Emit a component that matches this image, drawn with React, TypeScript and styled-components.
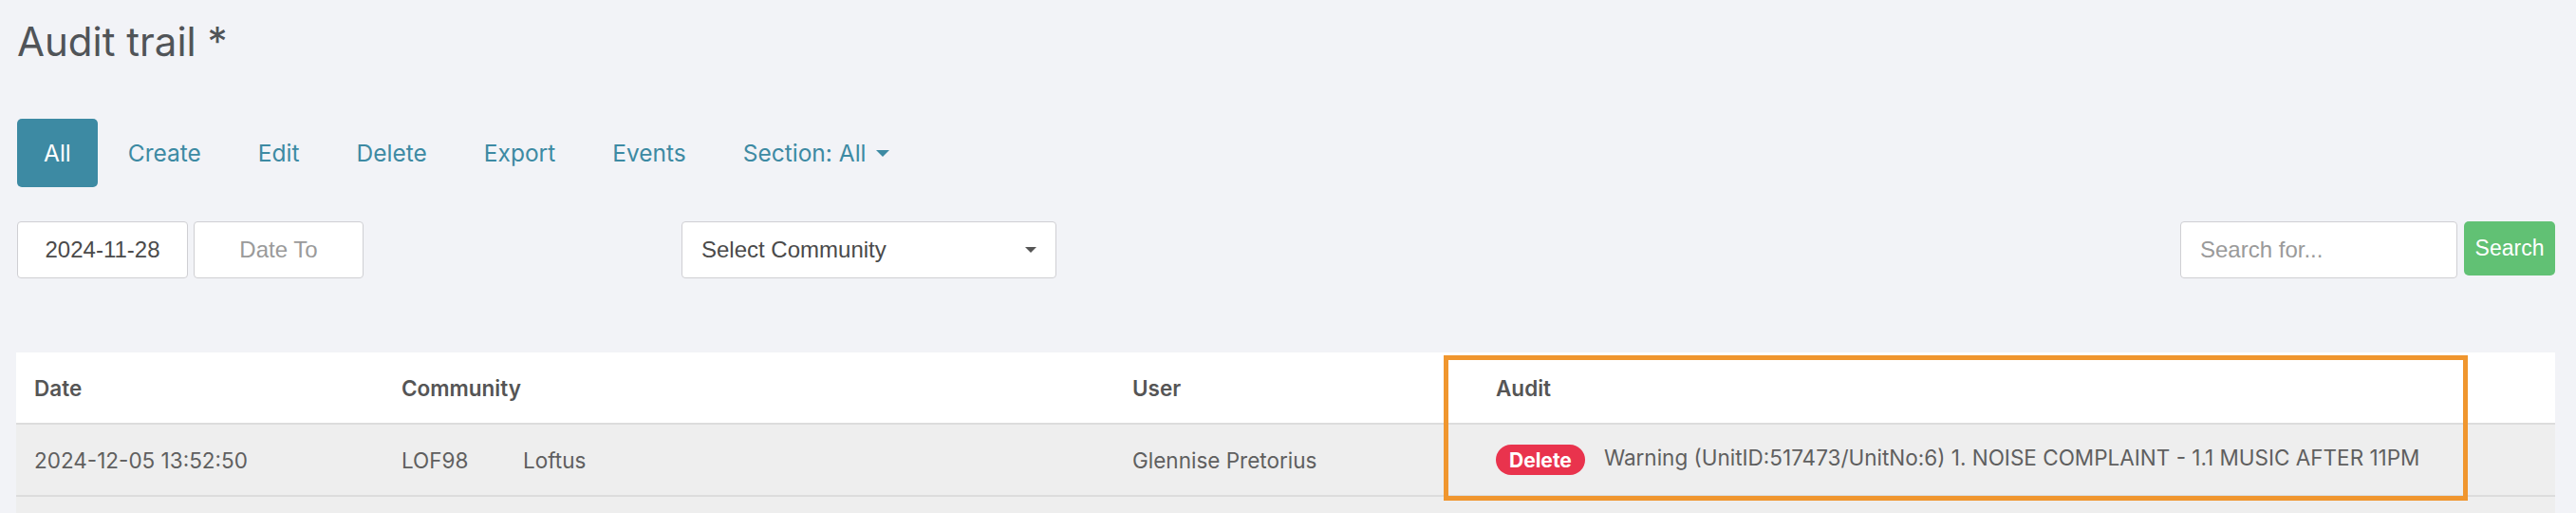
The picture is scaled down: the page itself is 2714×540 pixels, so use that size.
import React from 'react';
import styled, { createGlobalStyle } from 'styled-components';

const GlobalStyle = createGlobalStyle`
  html, body {
    margin: 0;
    padding: 0;
    background: #f2f3f7;
  }
  body {
    font-family: Inter, "Noto Sans", sans-serif;
    color: #555;
  }
`;

const Page = styled.div`
  padding: 18px 22px 0 17px;
  height: 540px;
  box-sizing: border-box;
  overflow: hidden;
`;

const Title = styled.h1`
  margin: 0 0 0 1px;
  font-size: 42px;
  font-weight: 400;
  line-height: 51px;
  color: #505458;
`;

const Tabs = styled.nav`
  display: flex;
  align-items: center;
  gap: 4px;
  margin: 56px 0 0 1px;
`;

const Tab = styled.a<{ $active?: boolean }>`
  display: flex;
  align-items: center;
  gap: 10px;
  height: 72px;
  padding: 0 28px;
  border-radius: 5px;
  font-size: 24.5px;
  color: ${(p) => (p.$active ? '#fff' : '#3d8aa3')};
  background: ${(p) => (p.$active ? '#3d8aa3' : 'transparent')};
  cursor: pointer;
`;

const Caret = styled.span<{ $color: string; $w: number }>`
  width: 0;
  height: 0;
  border-left: ${(p) => p.$w / 2}px solid transparent;
  border-right: ${(p) => p.$w / 2}px solid transparent;
  border-top: ${(p) => p.$w / 2}px solid ${(p) => p.$color};
`;

const Filters = styled.div`
  display: flex;
  align-items: flex-start;
  margin: 36px 0 0 1px;
`;

const Field = styled.div<{ $w: number; $center?: boolean; $muted?: boolean }>`
  box-sizing: border-box;
  display: flex;
  align-items: center;
  justify-content: ${(p) => (p.$center ? 'center' : 'space-between')};
  width: ${(p) => p.$w}px;
  height: 60px;
  padding: 0 20px;
  background: #fff;
  border: 1px solid #cfcfd3;
  border-radius: 4px;
  font-family: "Liberation Sans", Arial, sans-serif;
  font-size: 24px;
  color: ${(p) => (p.$muted ? '#9a9a9a' : '#4a4a4a')};
`;

const DateGroup = styled.div`
  display: flex;
  gap: 6px;
`;

const CommunityWrap = styled.div`
  margin-left: 335px;
`;

const SearchGroup = styled.div`
  display: flex;
  gap: 7px;
  margin-left: auto;
`;

const SearchButton = styled.button`
  height: 57px;
  width: 96px;
  padding: 0;
  border: none;
  border-radius: 5px;
  background: #61c174;
  color: #fff;
  font-family: "Liberation Sans", Arial, sans-serif;
  font-size: 23px;
`;

const TableWrap = styled.div`
  position: relative;
  margin-top: 78px;
`;

const Table = styled.table`
  width: 100%;
  border-collapse: collapse;
  table-layout: fixed;
  font-size: 22.5px;
`;

const HeadCell = styled.th<{ $w?: number }>`
  box-sizing: border-box;
  width: ${(p) => (p.$w ? `${p.$w}px` : 'auto')};
  height: 75px;
  padding: 0 19px;
  text-align: left;
  font-weight: 600;
  color: #555;
  background: #fff;
  border-bottom: 2px solid #dcdcdc;
`;

const Row = styled.tr`
  background: #eeeeee;
`;

const Cell = styled.td`
  box-sizing: border-box;
  height: 76px;
  padding: 0 19px;
  color: #5f5f5f;
  border-bottom: 2px solid #dcdcdc;
  white-space: nowrap;
`;

const Code = styled.span`
  display: inline-block;
  width: 128px;
`;

const Badge = styled.span`
  display: inline-flex;
  align-items: center;
  height: 32px;
  padding: 0 14px;
  margin-right: 20px;
  border-radius: 16px;
  background: #e9334d;
  color: #fff;
  font-weight: 700;
  font-size: 21px;
  vertical-align: middle;
`;

const Highlight = styled.div`
  position: absolute;
  left: 1504px;
  top: 3px;
  width: 1079px;
  height: 153px;
  box-sizing: border-box;
  border: 5px solid #f0962e;
  pointer-events: none;
`;

export default function App() {
  const tabs = ['All', 'Create', 'Edit', 'Delete', 'Export', 'Events'];
  return (
    <>
      <GlobalStyle />
      <Page>
        <Title>Audit trail *</Title>
        <Tabs>
          {tabs.map((t, i) => (
            <Tab key={t} $active={i === 0}>
              {t}
            </Tab>
          ))}
          <Tab>
            Section: All
            <Caret $color="#3d8aa3" $w={14} />
          </Tab>
        </Tabs>
        <Filters>
          <DateGroup>
            <Field $w={180} $center>
              2024-11-28
            </Field>
            <Field $w={179} $center $muted>
              Date To
            </Field>
          </DateGroup>
          <CommunityWrap>
            <Field $w={395}>
              Select Community
              <Caret $color="#555" $w={13} />
            </Field>
          </CommunityWrap>
          <SearchGroup>
            <Field $w={292} $muted>
              Search for...
            </Field>
            <SearchButton>Search</SearchButton>
          </SearchGroup>
        </Filters>
        <TableWrap>
          <Table>
            <thead>
              <tr>
                <HeadCell $w={387}>Date</HeadCell>
                <HeadCell $w={770}>Community</HeadCell>
                <HeadCell $w={383}>User</HeadCell>
                <HeadCell>Audit</HeadCell>
              </tr>
            </thead>
            <tbody>
              <Row>
                <Cell>2024-12-05 13:52:50</Cell>
                <Cell>
                  <Code>LOF98</Code>Loftus
                </Cell>
                <Cell>Glennise Pretorius</Cell>
                <Cell>
                  <Badge>Delete</Badge>
                  Warning (UnitID:517473/UnitNo:6) 1. NOISE COMPLAINT - 1.1 MUSIC AFTER 11PM
                </Cell>
              </Row>
              <Row>
                <Cell />
                <Cell />
                <Cell />
                <Cell />
              </Row>
            </tbody>
          </Table>
          <Highlight />
        </TableWrap>
      </Page>
    </>
  );
}
